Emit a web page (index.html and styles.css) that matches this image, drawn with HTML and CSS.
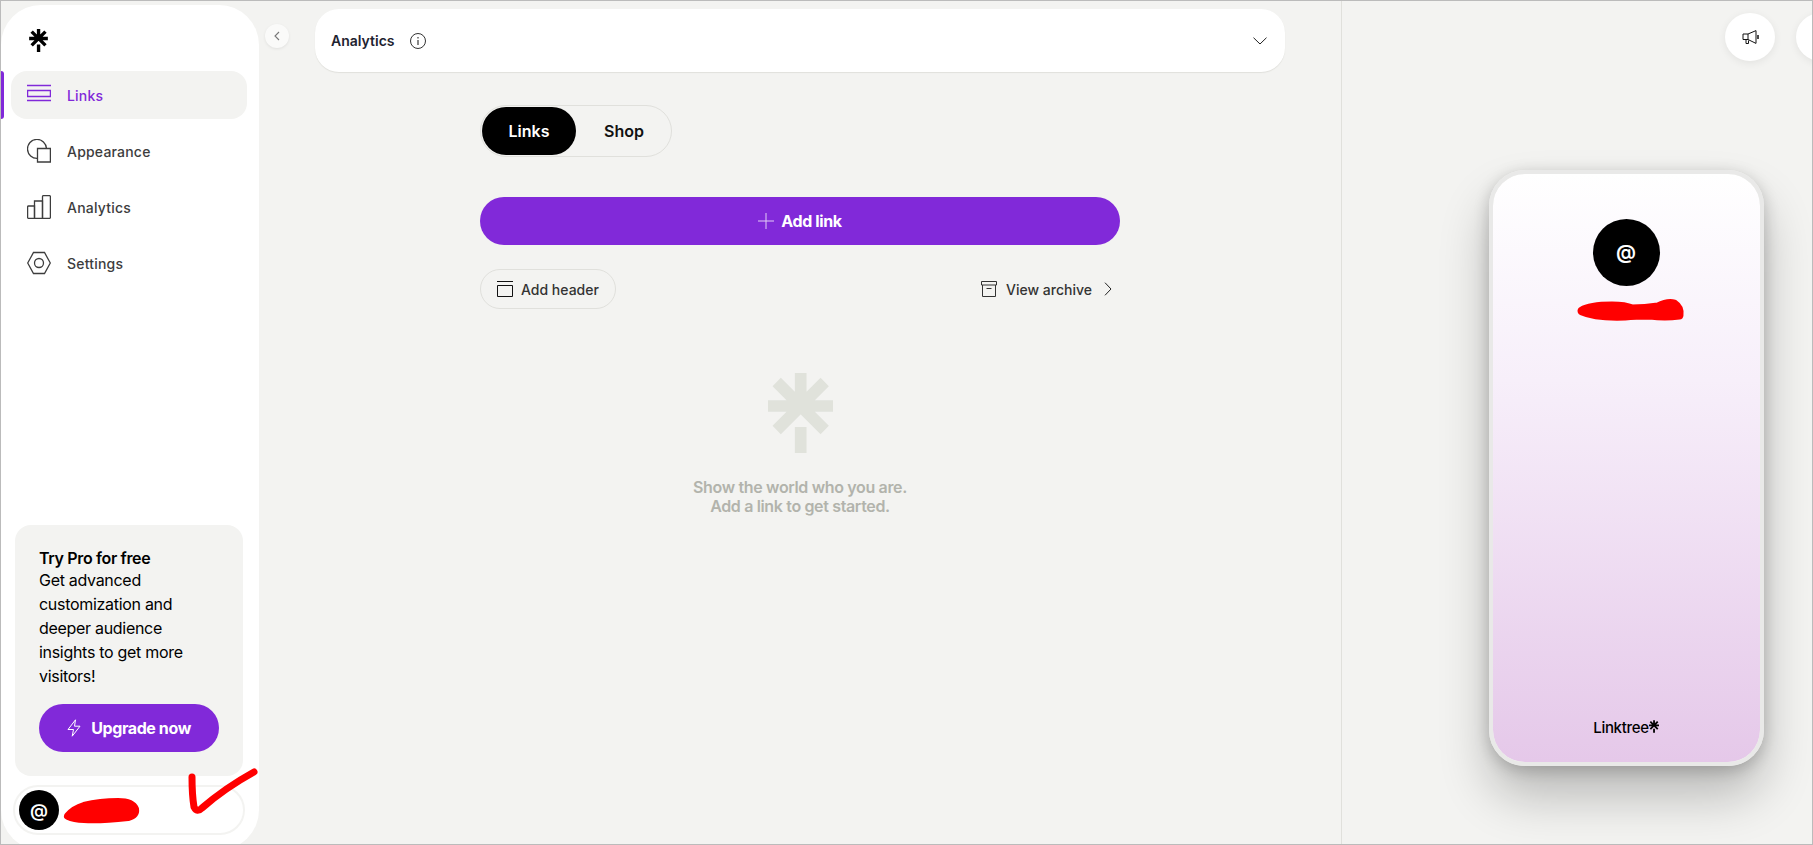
FILE: index.html
```html
<!DOCTYPE html>
<html lang="en">
<head>
    <meta charset="UTF-8">
    <title>Linktree Admin</title>
    <link rel="stylesheet" href="styles.css">
</head>
<body>
    <svg width="0" height="0" class="defs">
        <symbol id="tree" viewBox="0 0 65 80">
            <path d="M32.7 0V33M0 33H65M8.7 9L56.7 57M56.7 9L8.7 57M32.7 54V80" fill="none" stroke="currentColor" stroke-width="11.7"/>
        </symbol>
    </svg>

    <div class="app">
        <aside class="sidebar">
            <svg class="logo"><use href="#tree"/></svg>
            <nav class="nav">
                <a class="nav-item active">
                    <svg class="nav-icon" viewBox="0 0 24 24" fill="none" stroke="currentColor" stroke-width="1.3"><path d="M0 2.5H24M0 17.5H24"/><path d="M.6 7.5H23.4V13.5H.6Z"/></svg>
                    Links
                </a>
                <a class="nav-item">
                    <svg class="nav-icon" viewBox="0 0 24 24" fill="none" stroke="currentColor" stroke-width="1.3"><path d="M10.5 19.4A9.5 9.5 0 1 1 19.5 9.5"/><path d="M10.5 9.5H23.4V23H10.5Z"/></svg>
                    Appearance
                </a>
                <a class="nav-item">
                    <svg class="nav-icon" viewBox="0 0 24 24" fill="none" stroke="currentColor" stroke-width="1.3"><path d="M1.5 11H7.5V23.4H1.5A1 1 0 0 1 .6 22.5V12A1 1 0 0 1 1.5 11Z"/><path d="M7.5 6H15.5V23.4H7.5Z"/><path d="M16.5 .6H22.5A1 1 0 0 1 23.4 1.5V22.5A1 1 0 0 1 22.5 23.4H15.5V1.5A1 1 0 0 1 16.5 .6Z"/></svg>
                    Analytics
                </a>
                <a class="nav-item">
                    <svg class="nav-icon" viewBox="0 0 24 24" fill="none" stroke="currentColor" stroke-width="1.3"><path d="M.7 12L6.5 1.5H17.5L23.3 12L17.5 22.5H6.5Z"/><circle cx="12" cy="12" r="4.5"/></svg>
                    Settings
                </a>
            </nav>
            <div class="promo">
                <div class="promo-title">Try Pro for free</div>
                <p class="promo-text">Get advanced customization and deeper audience insights to get more visitors!</p>
                <button class="upgrade">
                    <svg width="14" height="18" viewBox="0 0 14 18" fill="none" stroke="#fff"><path d="M8.5 .8L1 10.5H6.5L5.2 17.2L13 7.2H7.5Z"/></svg>
                    Upgrade now
                </button>
            </div>
            <div class="account">
                <div class="avatar small">@</div>
            </div>
        </aside>

        <button class="collapse">
            <svg width="6" height="10" viewBox="0 0 6 10" fill="none" stroke="#777" stroke-width="1.1"><path d="M5 1L1 5L5 9"/></svg>
        </button>

        <main class="main">
            <div class="analytics-bar">
                <span class="analytics-label">Analytics</span>
                <svg class="info" width="16" height="16" viewBox="0 0 16 16" fill="none" stroke="#333"><circle cx="8" cy="8" r="7.5"/><path d="M8 7V12" stroke="#555" stroke-width="1.4"/><path d="M8 4V5.4" stroke="#555" stroke-width="1.4"/></svg>
                <svg class="chevron-down" width="14" height="8" viewBox="0 0 14 8" fill="none" stroke="#222"><path d="M.5 .7L7 7L13.5 .7"/></svg>
            </div>

            <div class="column">
                <div class="tabs">
                    <button class="tab selected">Links</button>
                    <button class="tab shop">Shop</button>
                </div>

                <button class="add-link">
                    <svg width="16" height="16" viewBox="0 0 16 16" fill="none" stroke="#e3cdf6"><path d="M8 0V16M0 8H16"/></svg>
                    Add link
                </button>

                <div class="actions">
                    <button class="add-header">
                        <svg width="16" height="16" viewBox="0 0 16 16" fill="none" stroke="#111"><path d="M0 .5H16"/><path d="M.5 4.5H15.5V15.5H.5Z"/></svg>
                        Add header
                    </button>
                    <a class="archive">
                        <svg width="16" height="16" viewBox="0 0 16 16" fill="none" stroke="#333"><path d="M.5 .5H15.5V4H.5Z"/><path d="M1.5 4V15.5H14.5V4"/><path d="M5.5 7.5H10.5"/></svg>
                        View archive
                        <svg class="archive-arrow" width="8" height="14" viewBox="0 0 8 14" fill="none" stroke="#222"><path d="M1 .7L7 7L1 13.3"/></svg>
                    </a>
                </div>

                <div class="empty">
                    <svg class="empty-logo"><use href="#tree"/></svg>
                    <p class="empty-text">Show the world who you are.<br>Add a link to get started.</p>
                </div>
            </div>
        </main>

        <section class="preview">
            <div class="preview-actions">
                <button class="round-btn">
                    <svg width="17" height="15" viewBox="0 0 17 15" fill="none" stroke="#111"><path d="M1 4H6V9.5H1Z"/><path d="M6 4L14 .6V13.4L6 9.5"/><path d="M4 9.5V13.5H6.5V10.5"/><path d="M16 5V9" stroke-width="1.5"/></svg>
                </button>
                <button class="round-btn"></button>
            </div>
            <div class="phone">
                <div class="avatar large">@</div>
                <div class="brand">Linktree<svg class="brand-logo"><use href="#tree"/></svg></div>
            </div>
        </section>

        <!-- hand drawn marks on top of the screenshot -->
        <svg class="marks" viewBox="0 0 1813 845">
            <g fill="#f00" stroke="#f00" stroke-linejoin="round" stroke-linecap="round">
                <path stroke-width="8" d="M68 816Q74 809 84 806Q100 802 118 802Q132 802 135 809Q136 815 128 817Q100 820 84 819Q74 819 68 816Z"/>
                <path stroke-width="9" d="M1582 311Q1590 306 1612 306Q1625 306 1632 309Q1645 309 1658 307Q1668 302 1674 304Q1680 308 1679 315Q1665 317 1650 315Q1635 315 1625 316Q1595 317 1582 311Z"/>
                <path fill="none" stroke-width="7" d="M192 777Q192 795 194 807Q197 813 202 808Q225 788 254 772"/>
            </g>
        </svg>
    </div>
</body>
</html>
```

FILE: styles.css
```css
* {
    box-sizing: border-box;
}

body {
    margin: 0;
    background: #f3f3f1;
    color: #000;
    font-family: 'Inter', sans-serif;
}

button {
    font-family: inherit;
    border: none;
    cursor: pointer;
}

.defs {
    position: absolute;
}

.app {
    position: relative;
    display: flex;
    height: 100vh;
    border: 1px solid #bbb;
    overflow: hidden;
}

.sidebar {
    flex: none;
    display: flex;
    flex-direction: column;
    width: 258px;
    height: 845px;
    margin-top: 4px;
    padding: 24px 0 15px;
    background: #fff;
    border-radius: 40px;
}

.logo {
    flex: none;
    width: 19px;
    height: 23px;
    margin-left: 28px;
    margin-bottom: 19px;
    color: #000;
}

.nav {
    display: flex;
    flex-direction: column;
    gap: 8px;
    margin-left: 10px;
    width: 236px;
}

.nav-item {
    position: relative;
    display: flex;
    align-items: center;
    gap: 16px;
    height: 48px;
    padding-left: 16px;
    border-radius: 16px;
    color: #3d3d3d;
    font-size: 14px;
    font-weight: 500;
    letter-spacing: 0.2px;
}

.nav-item.active {
    background: #f3f3f1;
    color: #8129d9;
}

.nav-item.active::before {
    content: '';
    position: absolute;
    left: -10px;
    top: 0;
    width: 3px;
    height: 48px;
    background: #8129d9;
    border-radius: 0 3px 3px 0;
}

.nav-icon {
    width: 24px;
    height: 24px;
}

.promo {
    margin: auto 0 0 14px;
    width: 228px;
    height: 251px;
    padding: 23px 24px 24px;
    background: #f3f3f1;
    border-radius: 16px;
}

.promo-title {
    font-size: 16px;
    font-weight: 600;
    line-height: 20px;
    letter-spacing: -0.35px;
}

.promo-text {
    margin: 0 0 16px;
    font-size: 16px;
    line-height: 24px;
    letter-spacing: -0.3px;
}

.upgrade {
    display: flex;
    align-items: center;
    justify-content: center;
    gap: 10px;
    width: 180px;
    height: 48px;
    background: #8129d9;
    color: #fff;
    border-radius: 24px;
    font-size: 16px;
    font-weight: 700;
    letter-spacing: -0.4px;
}

.account {
    display: flex;
    align-items: center;
    flex: none;
    margin: 9px 0 0 12px;
    width: 232px;
    height: 50px;
    padding-left: 4px;
    border: 2px solid #f3f3f1;
    border-radius: 25px;
}

.avatar {
    display: flex;
    align-items: center;
    justify-content: center;
    flex: none;
    background: #000;
    color: #fff;
    border-radius: 50%;
    font-weight: 600;
}

.avatar.small {
    width: 40px;
    height: 40px;
    font-size: 18px;
}

.avatar.large {
    width: 67px;
    height: 67px;
    margin-top: 45px;
    padding-bottom: 2px;
    font-size: 20px;
}

.collapse {
    position: absolute;
    left: 264px;
    top: 23px;
    display: flex;
    align-items: center;
    justify-content: center;
    width: 24px;
    height: 24px;
    padding: 0;
    background: #fafaf9;
    border-radius: 50%;
    box-shadow: 0 1px 3px rgba(0, 0, 0, 0.08);
}

.main {
    flex: none;
    width: 1083px;
    padding: 8px 0 0 56px;
    border-right: 1px solid #e0e0dc;
}

.analytics-bar {
    display: flex;
    align-items: center;
    width: 970px;
    height: 63px;
    padding: 0 18px 0 16px;
    background: #fff;
    border-radius: 24px;
    box-shadow: 0 1px 1px #e0e0dc;
}

.analytics-label {
    font-size: 14px;
    font-weight: 600;
    color: #1e2330;
}

.info {
    margin-left: 15px;
}

.chevron-down {
    margin-left: auto;
}

.column {
    display: flex;
    flex-direction: column;
    width: 640px;
    margin: 33px 0 0 165px;
}

.tabs {
    display: flex;
    align-self: flex-start;
    width: 192px;
    height: 52px;
    padding: 1px;
    border: 1px solid #e0e0dc;
    border-radius: 26px;
}

.tab {
    flex: 1;
    background: none;
    border-radius: 24px;
    font-size: 16px;
    font-weight: 600;
    color: #111;
}

.tab.selected {
    flex: none;
    width: 94px;
    background: #000;
    color: #fff;
}

.tab.shop {
    padding-left: 8px;
}

.add-link {
    display: flex;
    align-items: center;
    justify-content: center;
    gap: 7px;
    height: 48px;
    margin-top: 40px;
    background: #8129d9;
    color: #fff;
    border-radius: 24px;
    font-size: 16px;
    font-weight: 700;
    letter-spacing: -0.4px;
}

.actions {
    display: flex;
    align-items: center;
    justify-content: space-between;
    margin-top: 24px;
    padding-right: 8px;
}

.add-header {
    display: flex;
    align-items: center;
    gap: 8px;
    width: 136px;
    height: 40px;
    padding-left: 16px;
    background: none;
    border: 1px solid #e0e0dc;
    border-radius: 20px;
    font-size: 14px;
    font-weight: 500;
    color: #333;
}

.archive {
    display: flex;
    align-items: center;
    gap: 9px;
    font-size: 14px;
    font-weight: 500;
    color: #333;
}

.archive-arrow {
    margin-left: 3px;
}

.empty {
    display: flex;
    flex-direction: column;
    align-items: center;
    margin-top: 64px;
}

.empty-logo {
    width: 65px;
    height: 80px;
    color: #e0e2db;
}

.empty-text {
    margin: 25px 0 0;
    text-align: center;
    font-size: 16px;
    font-weight: 600;
    line-height: 19px;
    letter-spacing: -0.35px;
    color: #b2b3ac;
}

.preview {
    flex: none;
    display: flex;
    flex-direction: column;
    width: 568px;
    padding-top: 12px;
}

.preview-actions {
    display: flex;
    gap: 21px;
    justify-content: flex-end;
    padding-right: 64px;
}

.round-btn {
    display: flex;
    align-items: center;
    justify-content: center;
    flex: none;
    width: 50px;
    height: 48px;
    padding: 0;
    background: #fff;
    border-radius: 50%;
    box-shadow: 0 2px 8px rgba(0, 0, 0, 0.07);
}

.phone {
    display: flex;
    flex-direction: column;
    align-items: center;
    width: 275px;
    height: 596px;
    margin: 109px auto 0;
    background: linear-gradient(#fff, #f7effa 35%, #e5c8e9) padding-box;
    border: 4px solid #e9e9e8;
    border-radius: 36px;
    box-shadow: 0 30px 50px rgba(0, 0, 0, 0.24), 0 4px 16px rgba(0, 0, 0, 0.2);
}

.brand {
    display: flex;
    align-items: center;
    margin-top: auto;
    margin-bottom: 25px;
    font-size: 15px;
    font-weight: 500;
    letter-spacing: -0.3px;
}

.brand-logo {
    width: 10px;
    height: 13px;
    margin-top: -2px;
}

.marks {
    position: absolute;
    left: -1px;
    top: -1px;
    width: 1813px;
    height: 845px;
    pointer-events: none;
}
```
